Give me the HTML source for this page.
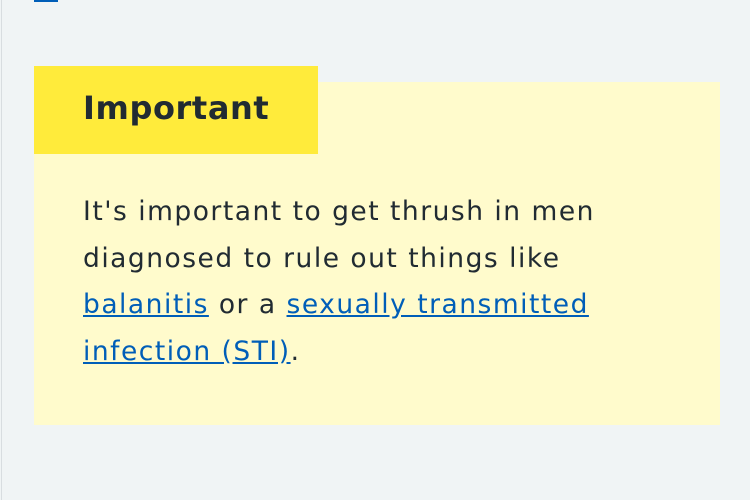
<!DOCTYPE html>
<html><head><style>
body{margin:0;width:750px;height:500px;background:#f0f4f5;font-family:"DejaVu Sans",sans-serif;position:relative;overflow:hidden}
.bl{position:absolute;left:1px;top:0;width:1px;height:500px;background:#d8dde0}
.blue{position:absolute;left:34px;top:0;width:24px;height:2px;background:#005eb8}
.box{position:absolute;left:34px;top:82px;width:686px;height:343px;background:#fffbcc}
.lab{position:absolute;left:34px;top:66px;width:284px;height:88px;background:#ffeb3b}
.lab span{position:absolute;left:49px;top:23px;font-size:32px;font-weight:bold;color:#212b32;letter-spacing:0.6px}
.txt{position:absolute;left:83px;top:189px;width:640px;font-size:26.5px;line-height:46.5px;color:#212b32;letter-spacing:1.5px;white-space:nowrap}
a{color:#005eb8;text-decoration:underline}
</style></head><body>
<div class="bl"></div><div class="blue"></div>
<div class="box"></div>
<div class="lab"><span>Important</span></div>
<div class="txt">It's important to get thrush in men<br>diagnosed to rule out things like<br><a>balanitis</a> or a <a>sexually transmitted</a><br><a>infection (STI)</a>.</div>
</body></html>
